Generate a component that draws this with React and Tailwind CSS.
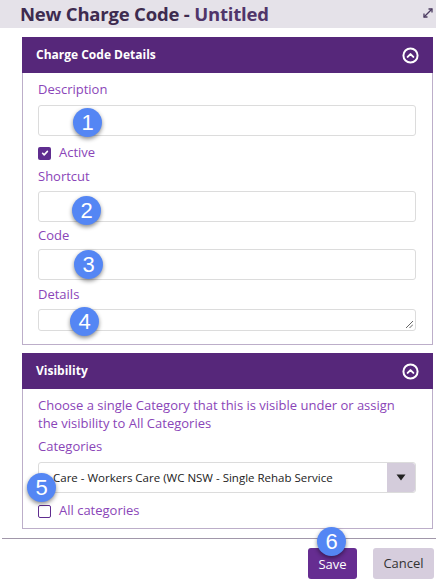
import React from "react";

function Badge({ n, className }) {
  return (
    <div
      className={
        "absolute w-[29px] h-[29px] rounded-full bg-[#5486f4] text-white flex items-center justify-center text-[22px] leading-none shadow-[0_2px_4px_rgba(0,0,0,0.45)] z-10 " +
        className
      }
      style={{ fontFamily: '"Liberation Sans", Arial, sans-serif' }}
    >
      {n}
    </div>
  );
}

function ChevronCircle() {
  return (
    <svg width="17" height="17" viewBox="0 0 24 24" fill="none" stroke="white" strokeWidth="2.8" strokeLinecap="round" strokeLinejoin="round">
      <circle cx="12" cy="12" r="10" />
      <path d="M8 14l4-4 4 4" />
    </svg>
  );
}

function PanelHeader({ title }) {
  return (
    <div className="h-[36px] bg-[#56277a] pl-[14px] pr-[14px] flex items-center justify-between">
      <span className="text-white font-bold text-[12px]">{title}</span>
      <ChevronCircle />
    </div>
  );
}

function Label({ children, className = "" }) {
  return <div className={"text-[#8a45b8] text-[13px] leading-[18px] " + className}>{children}</div>;
}

function Input({ className = "", children }) {
  return (
    <div className={"relative h-[31px] border border-[#dcdcdc] rounded-[3px] bg-white " + className}>
      {children}
    </div>
  );
}

export default function App() {
  return (
    <div
      className="w-[436px] h-[588px] bg-white overflow-hidden"
      style={{ fontFamily: '"Open Sans", "Noto Sans", sans-serif' }}
    >
      <div className="h-[28px] bg-[#e5e2e9] pl-[20px] pr-[2px] flex items-center justify-between">
        <span className="text-[18.5px] font-bold text-[#3d2b4f] leading-none tracking-[-0.2px]">
          New Charge Code - <span className="text-[#50356a]">Untitled</span>
        </span>
        <svg width="12" height="12" viewBox="0 0 12 12" fill="none" stroke="#4b3b60" strokeWidth="1.3" className="mt-[-2px]">
          <path d="M2 10L10 2" />
          <path d="M6.5 2H10V5.5" />
          <path d="M2 6.5V10H5.5" />
        </svg>
      </div>

      <div className="ml-[22px] mr-[3px] mt-[9px]">
        <PanelHeader title="Charge Code Details" />
        <div className="border border-t-0 border-[#bcaec9] pl-[15px] pr-[16px] pt-[7px] pb-[13px]">
          <Label>Description</Label>
          <Input className="mt-[7px]">
            <Badge n="1" className="left-[34px] top-[2px]" />
          </Input>
          <div className="mt-[8px] h-[18px] flex items-center gap-[8px]">
            <div className="w-[13px] h-[13px] rounded-[2px] bg-[#5f2d8f] flex items-center justify-center">
              <svg width="8" height="8" viewBox="0 0 10 10" fill="none" stroke="white" strokeWidth="2" strokeLinecap="round" strokeLinejoin="round">
                <path d="M2 5.3l2 2 4-4.3" />
              </svg>
            </div>
            <span className="text-[#8a45b8] text-[13px]">Active</span>
          </div>
          <Label className="mt-[5px]">Shortcut</Label>
          <Input className="mt-[6px]">
            <Badge n="2" className="left-[33px] top-[4px]" />
          </Input>
          <Label className="mt-[4px]">Code</Label>
          <Input className="mt-[5px]">
            <Badge n="3" className="left-[35px] top-[0px]" />
          </Input>
          <Label className="mt-[5px]">Details</Label>
          <div className="relative mt-[6px] h-[22px] border border-[#dcdcdc] rounded-[3px] bg-white">
            <Badge n="4" className="left-[31px] top-[-3px]" />
            <svg width="8" height="8" viewBox="0 0 8 8" className="absolute right-[2px] bottom-[2px]" stroke="#555" strokeWidth="0.9">
              <path d="M1 8L8 1" />
              <path d="M4.5 8L8 4.5" />
            </svg>
          </div>
        </div>

        <div className="mt-[8px]">
          <PanelHeader title="Visibility" />
          <div className="border border-t-0 border-[#bcaec9] pl-[15px] pr-[16px] pt-[7px] pb-[8px]">
            <Label>
              Choose a single Category that this is visible under or assign the visibility to All Categories
            </Label>
            <Label className="mt-[5px]">Categories</Label>
            <div className="relative mt-[7px] h-[31px] border border-[#dcdcdc] rounded-[3px] bg-white flex">
              <Badge n="5" className="left-[-12px] top-[10px]" />
              <div className="flex-1 pl-[14px] flex items-center text-[11.5px] text-[#222]">
                Care - Workers Care (WC NSW - Single Rehab Service
              </div>
              <div className="w-[28px] bg-[#d4ccdb] flex items-center justify-center rounded-r-[3px]">
                <svg width="10" height="7" viewBox="0 0 10 7">
                  <path d="M0.5 0.5H9.5L5 6.5Z" fill="#222" />
                </svg>
              </div>
            </div>
            <div className="mt-[9px] h-[18px] flex items-center gap-[8px]">
              <div className="w-[13px] h-[13px] rounded-[2px] border border-[#5f2d8f] bg-white" />
              <span className="text-[#8a45b8] text-[13px]">All categories</span>
            </div>
          </div>
        </div>
      </div>

      <div className="mt-[9px] ml-[2px] h-px bg-[#a197aa]" />

      <div className="mt-[9px] flex justify-end gap-[16px] pr-[2px]">
        <div className="relative w-[49px] h-[31px] rounded-[3px] bg-[#662d91] text-white text-[13px] flex items-center justify-center pt-[3px]">
          <Badge n="6" className="left-[9px] top-[-21px]" />
          Save
        </div>
        <div className="w-[61px] h-[31px] rounded-[3px] bg-[#d6cddd] text-[#333] text-[13px] flex items-center justify-center">
          Cancel
        </div>
      </div>
    </div>
  );
}
